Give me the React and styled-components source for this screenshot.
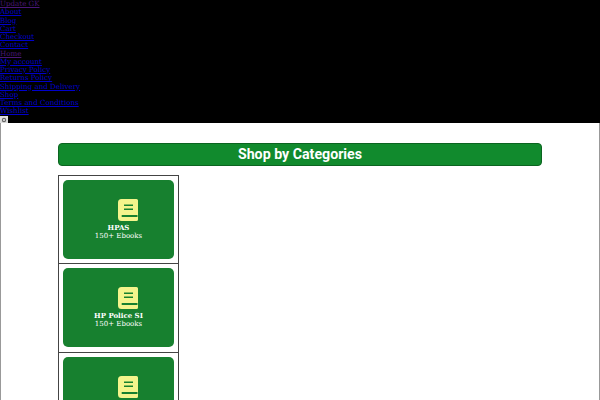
import React from "react";
import styled, { createGlobalStyle } from "styled-components";

const GlobalStyle = createGlobalStyle`
  html, body {
    margin: 0;
    padding: 0;
    height: 400px;
    overflow: hidden;
    background: #fff;
  }
`;

const TopMenu = styled.nav`
  background: #000;
  height: 123px;
  font-family: "DejaVu Serif", serif;
  font-size: 7.1px;
  line-height: 8.25px;
  overflow: hidden;
`;

const MenuLink = styled.a`
  display: block;
  height: 8.25px;
  color: ${props => (props.$visited ? "#4a1778" : "#0000cc")};
  text-decoration: underline;
`;

const BrokenImage = styled.svg`
  display: block;
  width: 8px;
  height: 8px;
`;

const Main = styled.main`
  box-sizing: border-box;
  height: 277px;
  padding: 20px 58px 0;
  border-left: 1px solid #999;
  border-right: 1px solid #999;
  overflow: hidden;
`;

const Heading = styled.h2`
  box-sizing: border-box;
  height: 23px;
  margin: 0 0 9px -1px;
  width: 484px;
  background: #118a2d;
  border: 1px solid #0b6420;
  border-radius: 4px;
  color: #fff;
  font-family: Roboto, sans-serif;
  font-size: 14.2px;
  font-weight: 700;
  line-height: 21px;
  text-align: center;
`;

const CategoryList = styled.div`
  display: flex;
  flex-direction: column;
  width: 121px;
  margin-left: -1px;
`;

const CategoryCell = styled.div`
  box-sizing: border-box;
  height: ${props => (props.$first ? "89px" : "88.5px")};
  padding: 4px;
  border: 1px solid #444;
  border-top-width: ${props => (props.$first ? "1px" : "0")};
`;

const CategoryCard = styled.a`
  display: flex;
  flex-direction: column;
  align-items: center;
  height: 79px;
  padding-top: 19px;
  box-sizing: border-box;
  background: #17802f;
  border-radius: 5px;
  color: #fff;
  font-family: "DejaVu Serif", serif;
  font-size: 7px;
  line-height: 8px;
  text-align: center;
  text-decoration: none;
`;

const CategoryName = styled.strong`
  font-weight: 700;
`;

const BookIcon = styled.svg`
  width: 20px;
  height: 22px;
  margin: 0 0 3px 19px;
`;

const links = [
  { label: "Update GK", visited: true },
  { label: "About" },
  { label: "Blog" },
  { label: "Cart" },
  { label: "Checkout" },
  { label: "Contact" },
  { label: "Home", visited: true },
  { label: "My account" },
  { label: "Privacy Policy" },
  { label: "Returns Policy" },
  { label: "Shipping and Delivery" },
  { label: "Shop" },
  { label: "Terms and Conditions" },
  { label: "Wishlist" },
];

// the third card runs past the bottom of the page, only its icon shows
const categories = [
  { id: 1, name: "HPAS", count: "150+ Ebooks" },
  { id: 2, name: "HP Police SI", count: "150+ Ebooks" },
  { id: 3 },
];

const Book = () => (
  <BookIcon viewBox="0 0 20 22">
    <path
      d="M3.5 0H18.5a1.5 1.5 0 0 1 1.5 1.5V20.5a1.5 1.5 0 0 1-1.5 1.5H3.5a3.5 3.5 0 0 1-3.5-3.5V3.5a3.5 3.5 0 0 1 3.5-3.5z"
      fill="#f4f48c"
    />
    <path d="M6 6.3H15M6 10.3H15" stroke="#17802f" strokeWidth="1.4" />
    <path d="M3.7 17H19.5" stroke="#17802f" strokeWidth="2" />
  </BookIcon>
);

export default function App() {
  return (
    <>
      <GlobalStyle />
      <TopMenu>
        {links.map(link => (
          <MenuLink key={link.label} href="#" $visited={link.visited}>
            {link.label}
          </MenuLink>
        ))}
        <BrokenImage viewBox="0 0 8 8">
          <rect width="8" height="8" fill="#ddd" />
          <circle cx="4" cy="4" r="2.2" fill="#666" />
          <circle cx="4" cy="4" r="1" fill="#eee" />
        </BrokenImage>
      </TopMenu>
      <Main>
        <Heading>Shop by Categories</Heading>
        <CategoryList>
          {categories.map((cat, i) => (
            <CategoryCell key={cat.id} $first={i === 0}>
              <CategoryCard href="#">
                <Book />
                {cat.name && <CategoryName>{cat.name}</CategoryName>}
                {cat.count && <span>{cat.count}</span>}
              </CategoryCard>
            </CategoryCell>
          ))}
        </CategoryList>
      </Main>
    </>
  );
}
